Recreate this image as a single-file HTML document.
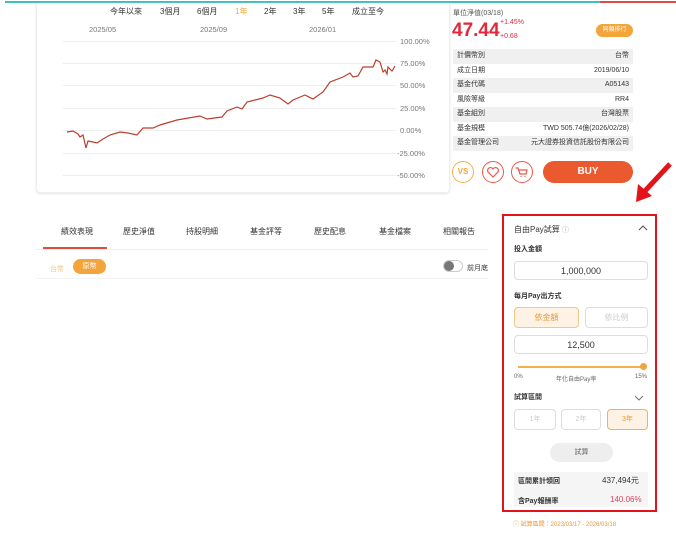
<!DOCTYPE html>
<html><head><meta charset="utf-8"><style>
*{margin:0;padding:0;box-sizing:border-box}
body{width:676px;height:533px;background:#fff;position:relative;overflow:hidden;font-family:"Liberation Sans","Noto Sans CJK TC",sans-serif;color:#333}
.a{position:absolute;white-space:nowrap}
.f7{font-size:7px}.f8{font-size:8px}.f9{font-size:9px}
.row{position:absolute;left:453px;width:180px;height:14.5px;font-size:7px;line-height:14.5px;padding:0 4px;display:flex;justify-content:space-between}
.row:nth-child(odd){background:#f0f0f0}
.box{position:absolute;border:1px solid #ddd;border-radius:4px;background:#fff;text-align:center;font-size:9px}
</style></head><body>
<div class="a" style="left:5px;top:1px;width:595px;height:2px;background:#3cc0b8"></div>
<div class="a" style="left:600px;top:1px;width:76px;height:2px;background:#e34b4b"></div>
<div class="a" style="left:36px;top:3px;width:414px;height:190px;border:1px solid #eee;border-top:none;border-radius:0 0 4px 4px;box-shadow:0 1px 2px #e5e5e5"></div>
<div class="a f8" style="top:6px;left:110px;color:#333">今年以來</div>
<div class="a f8" style="top:6px;left:160px">3個月</div>
<div class="a f8" style="top:6px;left:197px">6個月</div>
<div class="a f8" style="top:6px;left:235px;color:#f0a83c">1年</div>
<div class="a f8" style="top:6px;left:264px">2年</div>
<div class="a f8" style="top:6px;left:293px">3年</div>
<div class="a f8" style="top:6px;left:322px">5年</div>
<div class="a f8" style="top:6px;left:352px">成立至今</div>
<svg class="a" style="left:0;top:0" width="450" height="195">
<g stroke="#eee" stroke-width="1">
<line x1="63" y1="41.5" x2="396" y2="41.5"/><line x1="63" y1="63.5" x2="396" y2="63.5"/><line x1="63" y1="85.5" x2="396" y2="85.5"/><line x1="63" y1="108.5" x2="396" y2="108.5"/><line x1="63" y1="130.5" x2="396" y2="130.5"/><line x1="63" y1="153.5" x2="396" y2="153.5"/><line x1="63" y1="175.5" x2="396" y2="175.5"/>
</g>
<g font-size="7.5" fill="#777" font-family="Liberation Sans">
<text x="89" y="32">2025/05</text><text x="200" y="32">2025/09</text><text x="309" y="32">2026/01</text>
<text x="400" y="44">100.00%</text><text x="400" y="66">75.00%</text><text x="400" y="88">50.00%</text><text x="400" y="111">25.00%</text><text x="400" y="133">0.00%</text><text x="397" y="156">-25.00%</text><text x="397" y="178">-50.00%</text>
</g>
<polyline fill="none" stroke="#b8402e" stroke-width="1.2" points="67,132 73,131 78,134 80,137 83,135 86,148 88,141 93,142 97,143 103,139 110,135 120,132 128,133 137,135 143,128 153,128 160,125 177,120 200,116 207,119 222,117 227,111 237,107 242,109 247,102 263,98 270,95 280,98 288,104 293,100 305,95 313,99 323,92 330,82 343,77 350,73 353,77 358,76 363,67 373,67 376,60 380,62 383,72 385,70 387,74 388,67 392,71 395,66"/>
</svg>
<div class="a" style="left:453px;top:8px;font-size:7px;color:#555">單位淨值(03/18)</div>
<div class="a" style="left:452px;top:20px;font-size:19px;font-weight:bold;color:#e0293c">47.44</div>
<div class="a" style="left:500px;top:19px;font-size:7px;color:#e0293c">+1.45%</div>
<div class="a" style="left:500px;top:33px;font-size:7px;color:#e0293c">+0.68</div>
<div class="a" style="left:596px;top:24px;width:37px;height:13px;border-radius:7px;background:#f3a43a;color:#fff;font-size:6px;text-align:center;line-height:13px">同類排行</div>
<div style="position:absolute;left:0;top:49px">
<div class="row" style="top:0;background:#f0f0f0"><span>計價幣別</span><span>台幣</span></div>
<div class="row" style="top:14.5px;background:#fff"><span>成立日期</span><span>2019/06/10</span></div>
<div class="row" style="top:29px;background:#f0f0f0"><span>基金代碼</span><span>A05143</span></div>
<div class="row" style="top:43.5px;background:#fff"><span>風險等級</span><span>RR4</span></div>
<div class="row" style="top:58px;background:#f0f0f0"><span>基金組別</span><span>台灣股票</span></div>
<div class="row" style="top:72.5px;background:#fff"><span>基金規模</span><span>TWD 505.74億(2026/02/28)</span></div>
<div class="row" style="top:87px;background:#f0f0f0"><span>基金管理公司</span><span>元大證券投資信託股份有限公司</span></div>
</div>
<div class="a" style="left:452px;top:161px;width:22px;height:22px;border:1.5px solid #f3b04a;border-radius:50%;color:#f3a43a;font-size:8px;font-weight:bold;text-align:center;line-height:19px">VS</div>
<div class="a" style="left:482px;top:161px;width:22px;height:22px;border:1.5px solid #e8584a;border-radius:50%"></div>
<svg class="a" style="left:486px;top:166px" width="14" height="12"><path d="M7 11 L2 6 A2.6 2.6 0 0 1 7 3 A2.6 2.6 0 0 1 12 6 Z" fill="none" stroke="#e8584a" stroke-width="1.2"/></svg>
<div class="a" style="left:511px;top:161px;width:22px;height:22px;border:1.5px solid #e8584a;border-radius:50%"></div>
<svg class="a" style="left:515px;top:166px" width="14" height="12"><path d="M1 2 H3 L5 8 H11 L12 4 H4 M6 10.5 h0.1 M10 10.5 h0.1" fill="none" stroke="#e8584a" stroke-width="1.2" stroke-linecap="round"/></svg>
<div class="a" style="left:543px;top:161px;width:90px;height:22px;border-radius:11px;background:#ea5a2e;color:#fff;font-size:10px;font-weight:bold;text-align:center;line-height:22px">BUY</div>
<svg class="a" style="left:630px;top:160px" width="46" height="45"><line x1="40" y1="4" x2="14" y2="32" stroke="#e3121b" stroke-width="5"/><polygon points="6,42 8,24 22,36" fill="#e3121b"/></svg>

<div class="a f8" style="left:61px;top:226px">績效表現</div>
<div class="a f8" style="left:123px;top:226px">歷史淨值</div>
<div class="a f8" style="left:186px;top:226px">持股明細</div>
<div class="a f8" style="left:250px;top:226px">基金評等</div>
<div class="a f8" style="left:314px;top:226px">歷史配息</div>
<div class="a f8" style="left:379px;top:226px">基金檔案</div>
<div class="a f8" style="left:443px;top:226px">相關報告</div>
<div class="a" style="left:36px;top:249px;width:452px;height:1px;background:#eee"></div>
<div class="a" style="left:43px;top:247px;width:64px;height:2px;background:#d9503a"></div>
<div class="a f7" style="left:50px;top:264px;color:#f3c88a">台幣</div>
<div class="a" style="left:73px;top:259px;width:33px;height:15px;border-radius:8px;background:#f3a43a;color:#fff;font-size:7px;text-align:center;line-height:15px">原幣</div>
<div class="a" style="left:443px;top:260px;width:20px;height:12px;border:1px solid #ccc;border-radius:6px"></div>
<div class="a" style="left:444px;top:261px;width:10px;height:10px;border-radius:50%;background:#777"></div>
<div class="a f7" style="left:467px;top:263px">前月底</div>
<div class="a" style="left:36px;top:278px;width:452px;height:1px;background:#f3f3f3"></div>

<div class="a" style="left:502px;top:214px;width:155px;height:298px;border:2px solid #e3121b"></div>
<div class="a f8" style="left:514px;top:224px">自由Pay試算 <span style="color:#aaa;font-size:7px">ⓘ</span></div>
<svg class="a" style="left:638px;top:224px" width="10" height="7"><path d="M1 6 L5 2 L9 6" fill="none" stroke="#555" stroke-width="1.1"/></svg>
<div class="a f7" style="left:514px;top:244px;font-weight:bold">投入金額</div>
<div class="box" style="left:514px;top:261px;width:134px;height:19px;line-height:18px">1,000,000</div>
<div class="a f7" style="left:514px;top:291px;font-weight:bold">每月Pay出方式</div>
<div class="box" style="left:514px;top:307px;width:65px;height:21px;line-height:20px;background:#fdf2e3;border-color:#f0c68a;color:#e89a35;font-size:8px">依金額</div>
<div class="box" style="left:585px;top:307px;width:63px;height:21px;line-height:20px;color:#ccc;font-size:8px">依比例</div>
<div class="box" style="left:514px;top:335px;width:134px;height:19px;line-height:18px">12,500</div>
<div class="a" style="left:518px;top:366px;width:126px;height:1.5px;background:#f3b04a"></div>
<div class="a" style="left:640px;top:363px;width:7px;height:7px;border-radius:50%;background:#f3a43a"></div>
<div class="a" style="left:514px;top:374px;font-size:6px;color:#666">0%</div>
<div class="a" style="left:556px;top:374px;font-size:6px;color:#666">年化自由Pay率</div>
<div class="a" style="left:635px;top:374px;font-size:6px;color:#666">15%</div>
<div class="a f7" style="left:514px;top:392px;font-weight:bold">試算區間</div>
<svg class="a" style="left:634px;top:395px" width="10" height="6"><path d="M1 1 L5 5 L9 1" fill="none" stroke="#777" stroke-width="1"/></svg>
<div class="box" style="left:514px;top:409px;width:42px;height:21px;line-height:20px;color:#ccc;font-size:7px">1年</div>
<div class="box" style="left:561px;top:409px;width:40px;height:21px;line-height:20px;color:#ccc;font-size:7px">2年</div>
<div class="box" style="left:607px;top:409px;width:41px;height:21px;line-height:20px;background:#fdf2e3;border-color:#f0b060;color:#e89a35;font-size:7px">3年</div>
<div class="a" style="left:550px;top:443px;width:63px;height:19px;border-radius:10px;background:#eee;color:#666;font-size:7px;text-align:center;line-height:19px">試算</div>
<div class="a" style="left:514px;top:472px;width:134px;height:35px;background:#f5f5f5"></div>
<div class="a f7" style="left:518px;top:476px;font-weight:bold">區間累計領回</div>
<div class="a f8" style="left:602px;top:475px">437,494元</div>
<div class="a f7" style="left:518px;top:496px;font-weight:bold">含Pay報酬率</div>
<div class="a f8" style="left:610px;top:495px;color:#e04458">140.06%</div>
<div class="a" style="left:513px;top:519px;font-size:6px;color:#e89a35">ⓘ 試算區間：2023/03/17 - 2026/03/18</div>
</body></html>
